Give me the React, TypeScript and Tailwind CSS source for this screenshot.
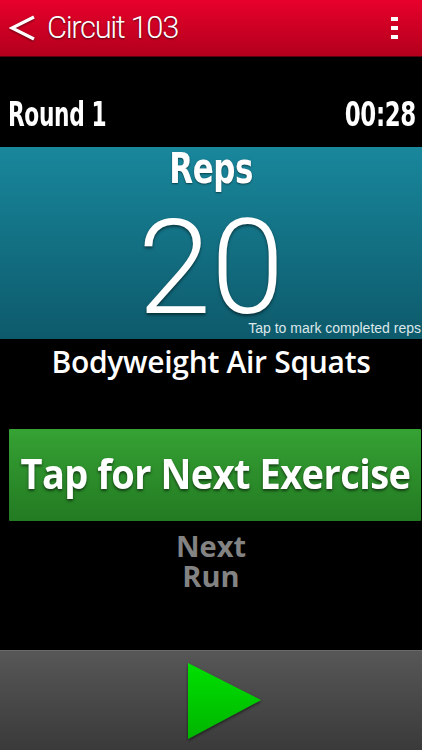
import React from "react";

export default function App() {
  const cond = { fontFamily: '"DejaVu Sans Condensed", "Liberation Sans", sans-serif' };
  return (
    <div className="w-[422px] h-[750px] bg-black flex flex-col overflow-hidden select-none">
      {/* Header */}
      <div className="h-[57px] shrink-0 bg-gradient-to-b from-[#e8002c] to-[#b3001c] flex items-center justify-between pl-[9px] pr-[24px] border-b border-[#5a0010]">
        <div className="flex items-center gap-[11px]">
          <svg width="27" height="28" viewBox="0 0 27 28" className="drop-shadow-[0_1px_1px_rgba(0,0,0,0.5)]">
            <path d="M25 3 L3 14 L25 25" fill="none" stroke="white" strokeWidth="3.2" strokeLinejoin="miter" />
          </svg>
          <span
            className="text-white text-[31px] font-light leading-none tracking-[-1.4px] [text-shadow:0_1px_2px_rgba(0,0,0,0.6)] pb-[2px]"
            style={{ fontFamily: 'Roboto, "Liberation Sans", sans-serif' }}
          >
            Circuit 103
          </span>
        </div>
        <div className="flex flex-col gap-[5px]">
          <div className="w-[7px] h-[4px] bg-white" />
          <div className="w-[7px] h-[4px] bg-white" />
          <div className="w-[7px] h-[4px] bg-white" />
        </div>
      </div>

      {/* Round row */}
      <div className="h-[90px] shrink-0 flex items-end justify-between pl-[8px] pr-[6px] pb-[16px]">
        <span className="inline-block origin-left scale-x-[0.71] whitespace-nowrap text-white text-[34px] font-bold leading-none tracking-[-0.5px] [text-shadow:0_1px_1px_rgba(0,0,0,0.6)]" style={cond}>Round 1</span>
        <span className="inline-block origin-right scale-x-[0.75] whitespace-nowrap text-white text-[34px] font-bold leading-none tracking-[-0.5px]" style={cond}>00:28</span>
      </div>

      {/* Reps panel */}
      <div className="h-[192px] shrink-0 bg-gradient-to-b from-[#19879c] to-[#0d5a6b] flex flex-col items-center relative">
        <span className="inline-block scale-x-[0.82] text-white text-[42px] font-bold leading-none mt-[1px] tracking-[-0.5px] [text-shadow:0_1px_2px_rgba(0,0,0,0.5)]" style={cond}>Reps</span>
        <span
          className="text-white text-[132px] font-light leading-none mt-[12px] [text-shadow:0_2px_3px_rgba(0,0,0,0.5)]"
          style={{ fontFamily: 'Roboto, "Open Sans", sans-serif' }}
        >
          20
        </span>
        <span
          className="absolute right-[1px] bottom-[4px] text-[#dce7ea] text-[14px] leading-none"
          style={{ fontFamily: '"Liberation Sans", Arial, sans-serif' }}
        >
          Tap to mark completed reps
        </span>
      </div>

      {/* Exercise name */}
      <div className="h-[90px] shrink-0 flex justify-center pt-[8px]">
        <span className="text-white text-[30px] font-semibold leading-none tracking-[-0.3px]" style={{ fontFamily: '"Open Sans", sans-serif' }}>
          Bodyweight Air Squats
        </span>
      </div>

      {/* Next exercise button */}
      <div className="h-[92px] shrink-0 ml-[9px] mr-[1px] bg-gradient-to-b from-[#36a234] to-[#237a22] rounded-[1px] flex items-center justify-center">
        <span
          className="inline-block whitespace-nowrap scale-x-[0.905] text-white text-[42px] font-bold leading-none tracking-[-0.6px] [text-shadow:0_2px_3px_rgba(0,0,0,0.55)] pb-[4px]"
          style={{ fontFamily: '"Open Sans", sans-serif' }}
        >
          Tap for Next Exercise
        </span>
      </div>

      {/* Next run */}
      <div className="flex-1 flex flex-col items-center pt-[10px]">
        <span className="text-[#838383] text-[29px] font-bold leading-[30px]" style={{ fontFamily: '"Open Sans", sans-serif' }}>Next</span>
        <span className="text-[#838383] text-[29px] font-bold leading-[30px]" style={{ fontFamily: '"Open Sans", sans-serif' }}>Run</span>
      </div>

      {/* Bottom bar */}
      <div className="h-[100px] shrink-0 bg-gradient-to-b from-[#575757] to-[#3a3a3a] border-t border-[#6a6a6a] flex items-center justify-center">
        <svg width="82" height="84" viewBox="0 0 82 84" className="ml-[30px] mt-[2px]">
          <defs>
            <linearGradient id="pg" x1="0" y1="0" x2="0" y2="1">
              <stop offset="0" stopColor="#00e000" />
              <stop offset="1" stopColor="#00b400" />
            </linearGradient>
            <filter id="ps" x="-20%" y="-20%" width="140%" height="140%">
              <feDropShadow dx="0" dy="1.5" stdDeviation="1.5" floodColor="#000" floodOpacity="0.6" />
            </filter>
          </defs>
          <path d="M3 3 L76 40 L3 79 Z" fill="url(#pg)" filter="url(#ps)" />
        </svg>
      </div>
    </div>
  );
}
